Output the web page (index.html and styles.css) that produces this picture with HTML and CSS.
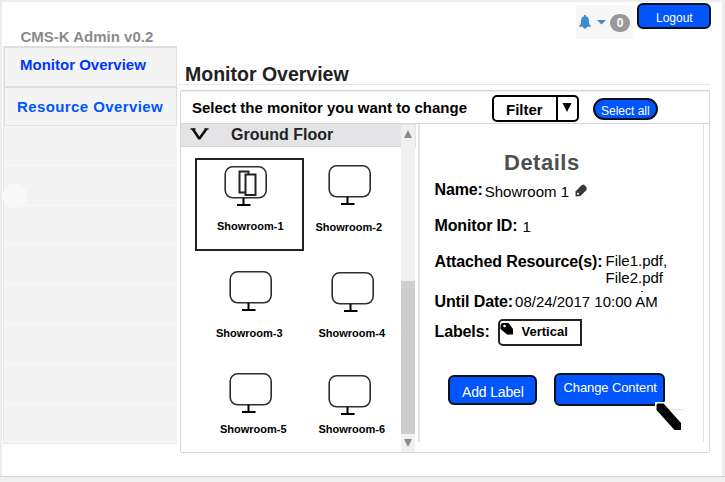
FILE: index.html
```html
<!DOCTYPE html>
<html lang="en">
<head>
<meta charset="utf-8">
<title>CMS-K Admin</title>
<link rel="stylesheet" href="styles.css">
</head>
<body>
<svg class="defs" width="0" height="0">
  <symbol id="monitor" viewBox="0 0 44 42">
    <rect x="1.2" y="1.8" width="41" height="31" rx="7.5" fill="#fff" stroke="#2e2e2e" stroke-width="1.6"/>
    <path d="M19.500 33V40M13 40H26.500" fill="none" stroke="#000" stroke-width="2"/>
  </symbol>
</svg>
<div class="app">
  <header class="top">
    <div class="brand">CMS-K Admin v0.2</div>
    <div class="notify">
      <svg width="14" height="16" viewBox="0 0 14 16"><path d="M7 1C7.800 1 8 1.500 8 2.200C10.500 3 11 5 11 7.500C11 10 12 11 13.300 12.800H.7C2 11 3 10 3 7.500C3 5 3.500 3 6 2.200C6 1.500 6.200 1 7 1ZM5 12.800H9C9 15.300 5 15.300 5 12.800Z" fill="#428bca"/></svg>
      <svg class="caret" width="9" height="5" viewBox="0 0 9 5"><path d="M0 0H9L4.500 4.500Z" fill="#428bca"/></svg>
      <span class="count">0</span>
    </div>
    <button class="btn logout">Logout</button>
  </header>
  <div class="columns">
    <nav class="side">
      <a class="link first">Monitor Overview</a>
      <a class="link second">Resource Overview</a>
      <span class="row"></span><span class="row"><i class="dot"></i></span><span class="row"></span><span class="row"></span>
      <span class="row"></span><span class="row"></span><span class="row"></span><span class="row"></span>
    </nav>
    <main class="content">
      <h1>Monitor Overview</h1>
      <section class="panel">
        <div class="toolbar">
          <span class="prompt">Select the monitor you want to change</span>
          <div class="filter"><span class="filter-text">Filter</span><span class="filter-arrow"><svg width="10" height="9" viewBox="0 0 10 9"><path d="M.5 0H9.500L5 9Z"/></svg></span></div>
          <button class="btn select-all">Select all</button>
        </div>
        <div class="body">
          <div class="list">
            <div class="list-main">
              <div class="floor">
                <svg width="20" height="14" viewBox="0 0 20 14"><path d="M.5 1H5.500M14.500 1H18.500" stroke="#111" stroke-width="1.400"/><path d="M2.800 1L9.300 10.800L16.300 1" fill="none" stroke="#111" stroke-width="2.600" stroke-linejoin="bevel"/></svg>
                <span>Ground Floor</span>
              </div>
              <div class="grid">
                <div class="tile t1"><svg width="44" height="42" viewBox="0 0 44 42"><use href="#monitor"/><path d="M15.500 6.500H24.500V9.500H21.500V27.500H15.500ZM21.500 9.500H31.500V30H21.500Z" fill="#fff" stroke="#222" stroke-width="2"/></svg><span>Showroom-1</span></div>
                <div class="tile t2"><svg width="44" height="42"><use href="#monitor"/></svg><span>Showroom-2</span></div>
                <div class="tile t3"><svg width="44" height="42"><use href="#monitor"/></svg><span>Showroom-3</span></div>
                <div class="tile t4"><svg width="44" height="42"><use href="#monitor"/></svg><span>Showroom-4</span></div>
                <div class="tile t5"><svg width="44" height="42"><use href="#monitor"/></svg><span>Showroom-5</span></div>
                <div class="tile t6"><svg width="44" height="42"><use href="#monitor"/></svg><span>Showroom-6</span></div>
              </div>
            </div>
            <div class="scroll">
              <svg width="8" height="8" viewBox="0 0 8 8"><path d="M4 0L8 8H0Z" fill="#8a8a8a"/></svg>
              <div class="thumb"></div>
              <svg width="8" height="8" viewBox="0 0 8 8"><path d="M0 0H8L4 8Z" fill="#8a8a8a"/></svg>
            </div>
          </div>
          <div class="details">
            <h2>Details</h2>
            <div class="field name"><b>Name:</b><span>Showroom 1</span>
              <svg width="12" height="13" viewBox="0 0 12 13"><path d="M6.500 1.200L9 .5L11.800 3.800L11.500 6L5.500 12L.6 12.500L.5 7.500Z" fill="#333a3d"/><circle cx="3" cy="9.800" r="1" fill="#fff"/></svg>
            </div>
            <div class="field ident"><b>Monitor ID:</b><span>1</span></div>
            <div class="field files"><b>Attached Resource(s):</b><span>File1.pdf,<br>File2.pdf</span></div>
            <i class="speck"></i>
            <div class="field until"><b>Until Date:</b><span>08/24/2017 10:00 AM</span></div>
            <div class="field labels"><b>Labels:</b>
              <div class="tag"><svg width="14" height="13" viewBox="0 0 14 13"><path d="M.5 3L2 1H8.500L13 7V12.500H7L.5 7Z"/><circle cx="4.500" cy="4" r="1.300" fill="#fff"/></svg><span>Vertical</span></div>
            </div>
            <div class="actions">
              <button class="btn add">Add Label</button>
              <button class="btn change">Change Content
                <svg class="pen" width="30" height="30" viewBox="0 0 30 30"><path d="M0 8V0H10V2H2V8Z" fill="#fff"/><path d="M1.500 3L2.500 1.500L8.500 1.500L26 21V28L19.500 28L1.500 8Z" fill="#000"/></svg>
              </button>
            </div>
            <div class="rule"></div>
          </div>
        </div>
      </section>
    </main>
  </div>
</div>
<div class="foot"></div>
</body>
</html>
```

FILE: styles.css
```css
* { box-sizing: border-box; }
body {
  margin: 0;
  width: 725px;
  height: 482px;
  overflow: hidden;
  background: #fff;
  font-family: "Liberation Sans", Arial, sans-serif;
  color: #000;
}
svg { display: block; flex: none; overflow: visible; }
.defs { position: absolute; }
.app { height: 476px; border: solid #ededed; border-width: 2px 3px 0 2px; }
.foot { height: 6px; background: #f0f0f0; border-top: 1px solid #d2d2d2; }

.btn {
  display: block;
  padding: 0;
  font-family: inherit;
  text-align: left;
  white-space: nowrap;
  color: #fff;
  background: #0055ff;
  border: 2px solid #0b0f1c;
  border-radius: 6px;
}

.top { display: flex; align-items: flex-start; height: 44px; }
.brand { width: 555.5px; margin: 26px 0 0 18.5px; font: bold 15px/18px "Liberation Sans", Arial, sans-serif; color: #8a8a8a; }
.notify { display: flex; width: 57px; height: 34px; margin: 3px 0 0; padding-left: 2px; background: #f7f7f7; }
.notify svg { margin-top: 9px; }
.notify .caret { margin: 15px 0 0 5px; }
.count { width: 20px; height: 18px; margin: 9px 0 0 4px; border-radius: 9px; background: #999; color: #fff; font: bold 12px/18px "Liberation Sans", Arial, sans-serif; text-align: center; }
.logout { width: 74px; height: 26px; margin: 1px 0 0 4px; padding: 3px 0 0 17px; font-size: 12px; line-height: 18px; }

.columns { display: flex; }
.side { display: flex; flex-direction: column; width: 174px; height: 398px; margin-left: 1px; background: #f4f4f4; border: solid #e9e9e9; border-width: 0 0 1px 1px; }
.link { flex: none; height: 40px; border: 1px solid #dedede; border-width: 2px 1px 0 1px; font: bold 15px/20px "Liberation Sans", Arial, sans-serif; white-space: nowrap; }
.first { padding: 7px 0 0 15px; color: #0037ff; }
.second { padding: 9px 0 0 12px; border-bottom: 1px solid #e4e4e4; letter-spacing: .4px; color: #0055ff; }
.row { flex: 1; border-bottom: 1px solid #fafafa; }
.row:last-child { border: 0; }
.dot { display: block; position: relative; top: 18px; left: -1px; width: 24px; height: 24px; border-radius: 50%; background: #f9f9f9; }

.content { width: 532px; margin-left: 1px; }
h1 { height: 39px; margin: 0 0 5px; padding: 17px 0 0 7px; border-bottom: 1px solid #e6e6e6; font-size: 19.5px; line-height: 22px; color: #222; }
.panel { display: flex; flex-direction: column; width: 530px; height: 363px; margin-left: 2px; border: 1px solid #d6d6d6; border-radius: 2px; }
.toolbar { display: flex; height: 33px; border-top: 1px solid #f0f0f0; border-bottom: 1px solid #d8d8d8; }
.prompt { width: 300px; padding: 6px 0 0 11px; font: bold 15px/20px "Liberation Sans", Arial, sans-serif; white-space: nowrap; }
.filter { display: flex; width: 87px; height: 27px; margin: 3px 0 0 11px; border: 2px solid #000; border-radius: 5px; }
.filter-text { width: 62px; padding: 3px 0 0 12px; font: bold 15px/20px "Liberation Sans", Arial, sans-serif; }
.filter-arrow { flex: 1; padding: 6px 0 0 4px; border-left: 2px solid #000; }
.select-all { width: 65px; height: 22px; margin: 6px 0 0 14px; padding: 2px 0 0 6px; border-radius: 11px; font-size: 12px; line-height: 18px; }

.body { display: flex; flex: 1; }
.list { display: flex; width: 237px; height: 328px; }
.list-main { width: 220px; }
.floor { display: flex; width: 235px; height: 23px; padding-left: 9px; background: #e4e4e6; border-bottom: 1px solid #d4d4d8; }
.floor svg { margin-top: 4px; }
.floor span { margin-left: 21px; font: bold 16px/21px "Liberation Sans", Arial, sans-serif; color: #222; }
.grid { display: grid; grid-template-columns: 109px 109px; grid-template-rows: 93px 86px 80px; column-gap: 7px; row-gap: 14px; margin: 11px 0 0 14px; width: 225px; }
.tile { display: flex; flex-direction: column; font: bold 11px/12px "Liberation Sans", Arial, sans-serif; }
.t1 { padding: 5px 0 0 27px; border: 2px solid #222; }
.t1 span { margin: 13px 0 0 -7px; }
.t2 { padding: 6px 0 0 17px; }
.t2 span { margin: 15px 0 0 -12.500px; }
.t3 { padding: 5px 0 0 34px; }
.t3 span { margin: 15px 0 0 -13px; }
.t4 { padding: 6px 0 0 20px; }
.t4 span { margin: 14px 0 0 -12.500px; }
.t5 { padding: 7px 0 0 34px; }
.t5 span { margin: 9px 0 0 -9px; }
.t6 { padding: 9px 0 0 17px; }
.t6 span { margin: 7px 0 0 -9.500px; }
.scroll { position: relative; display: flex; flex-direction: column; align-items: center; width: 14px; height: 327px; margin-top: 1px; padding-top: 5px; background: #f0f0f0; }
.thumb { width: 14px; height: 153px; margin: 143px 0 5px; background: #cdcdcd; }

.details { width: 286px; height: 318px; border: solid #e2e2e2; border-width: 0 1px 0 2px; }
h2 { margin: 27px 0 0 84px; font-size: 22px; line-height: 24px; letter-spacing: .5px; color: #4f4f4f; }
.field { display: flex; margin-left: 14.5px; font-size: 15px; line-height: 17px; white-space: nowrap; }
.field b { font-size: 16px; line-height: 18px; letter-spacing: -.13px; }
.name { margin-top: 6px; height: 18px; }
.name span { margin: 2px 6px 0 2px; }
.name svg { margin-top: 3px; }
.ident { margin-top: 18px; }
.ident span { margin: 1px 0 0 5px; }
.files { margin-top: 18px; height: 35px; }
.files span { margin: -1px 0 0 3px; }
.speck { display: block; width: 2px; height: 1px; margin: 3px 0 0 221px; background: #666; }
.until { margin-top: 1px; }
.until span { margin: 0 0 0 2px; }
.labels { margin-top: 8px; height: 27px; }
.labels b { width: 63.5px; padding-top: 4px; }
.tag { display: flex; width: 84px; height: 27px; border: 2px solid #222; border-radius: 5px 0 0 5px; }
.tag svg { margin-top: 1px; }
.tag span { margin: 3px 0 0 7.500px; font: bold 13px/16px "Liberation Sans", Arial, sans-serif; }
.actions { display: flex; height: 33px; margin: 27px 0 0 28px; }
.add { width: 89px; height: 30px; margin: 2px 17px 0 0; padding: 3px 0 0 12px; font-size: 14px; line-height: 20px; letter-spacing: -.15px; }
.change { position: relative; width: 111px; height: 33px; padding: 0 0 3px 7.500px; font-size: 13px; line-height: 20px; letter-spacing: -.1px; }
.pen { position: absolute; left: 99px; top: 27px; }
.rule { width: 30px; height: 1px; margin: 3px 0 0 234px; background: #e2e2e2; }
```
